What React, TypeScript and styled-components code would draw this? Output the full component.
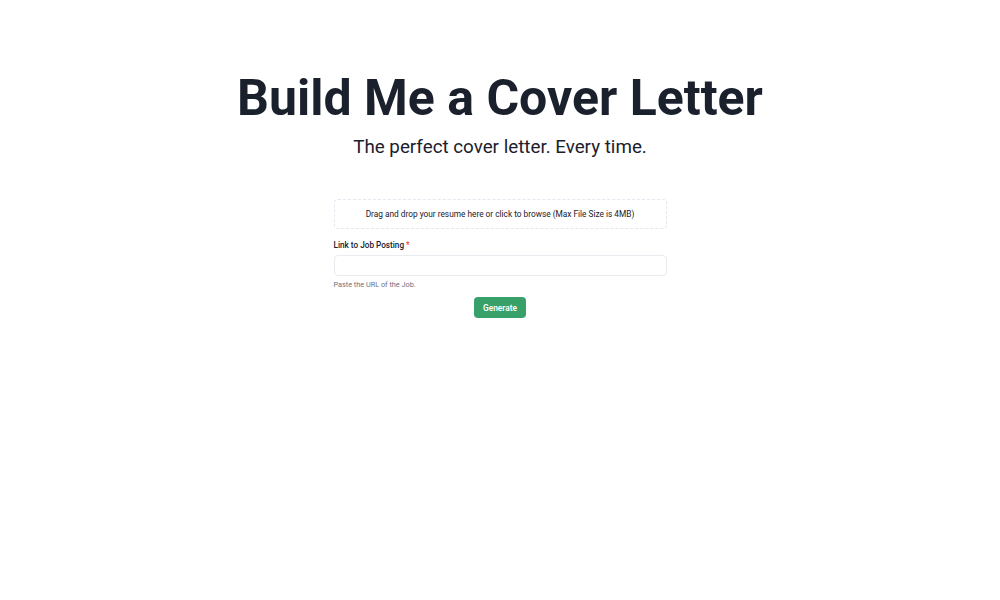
import styled, { createGlobalStyle } from "styled-components";

const GlobalStyle = createGlobalStyle`
  html, body {
    margin: 0;
    padding: 0;
    background: #ffffff;
    font-family: Roboto, "Liberation Sans", sans-serif;
    color: #1a202c;
  }
`;

const Page = styled.div`
  display: flex;
  flex-direction: column;
  align-items: center;
  padding-top: 68px;
`;

const Title = styled.h1`
  margin: 0;
  font-size: 50px;
  font-weight: 700;
  line-height: 1.2;
  color: #1a202c;
`;

const Subtitle = styled.p`
  margin: 8px 0 0;
  font-size: 18.8px;
  font-weight: 400;
  color: #1a202c;
`;

const Form = styled.form`
  width: 333px;
  margin-top: 41px;
  display: flex;
  flex-direction: column;
`;

const DropZone = styled.div`
  height: 30px;
  box-sizing: border-box;
  border: 1px dashed #e2e8f0;
  border-radius: 4px;
  display: flex;
  align-items: center;
  justify-content: center;
  font-size: 8.3px;
  color: #1a202c;
  cursor: pointer;
`;

const Label = styled.label`
  margin-top: 11px;
  font-size: 8.2px;
  font-weight: 500;
  color: #1a202c;

  span {
    color: #e53e3e;
    margin-left: 2px;
  }
`;

const Input = styled.input`
  margin-top: 5px;
  height: 21px;
  box-sizing: border-box;
  border: 1px solid #e8ecf1;
  border-radius: 4px;
  outline: none;
  padding: 0 8px;
  font-size: 8px;
`;

const Helper = styled.div`
  margin-top: 4px;
  font-size: 7.3px;
  color: #6b7280;
`;

const Button = styled.button`
  align-self: center;
  margin-top: 8px;
  height: 21px;
  padding: 0 9px;
  border: none;
  border-radius: 4px;
  background: #38a169;
  color: #ffffff;
  font-family: inherit;
  font-size: 8.3px;
  font-weight: 600;
  cursor: pointer;
`;

export default function App() {
  return (
    <>
      <GlobalStyle />
      <Page>
        <Title>Build Me a Cover Letter</Title>
        <Subtitle>The perfect cover letter. Every time.</Subtitle>
        <Form onSubmit={(e) => e.preventDefault()}>
          <DropZone>
            Drag and drop your resume here or click to browse (Max File Size is 4MB)
          </DropZone>
          <Label>
            Link to Job Posting<span>*</span>
          </Label>
          <Input type="text" />
          <Helper>Paste the URL of the Job.</Helper>
          <Button type="submit">Generate</Button>
        </Form>
      </Page>
    </>
  );
}
